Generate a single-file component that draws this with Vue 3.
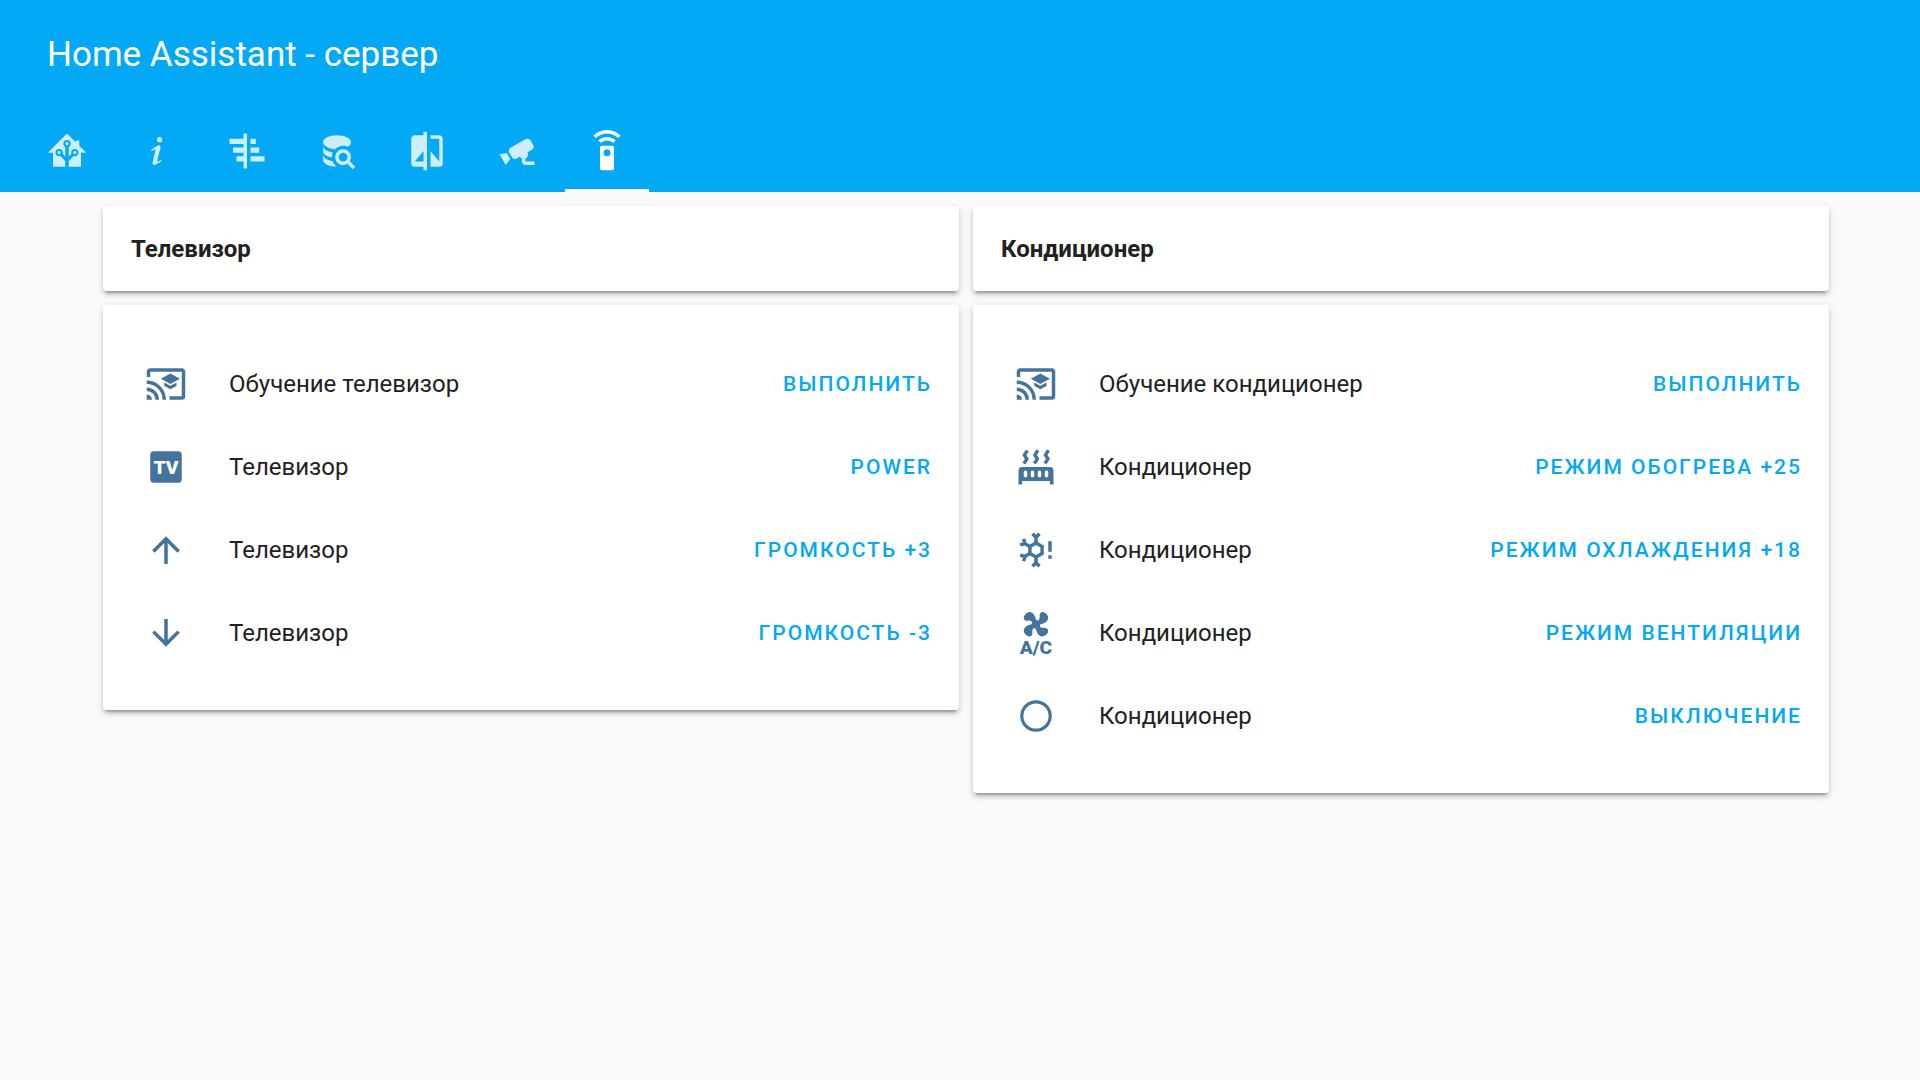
<script setup>
import { ref } from 'vue'

const icons = {
  home: 'M21.8,13H20V21H13V17.67L15.79,14.88L16.5,15C17.66,15 18.6,14.06 18.6,12.9C18.6,11.74 17.66,10.8 16.5,10.8A2.1,2.1 0 0,0 14.4,12.9L14.5,13.61L13,15.13V9.65C13.66,9.29 14.1,8.6 14.1,7.8A2.1,2.1 0 0,0 12,5.7A2.1,2.1 0 0,0 9.9,7.8C9.9,8.6 10.34,9.29 11,9.65V15.13L9.5,13.61L9.6,12.9A2.1,2.1 0 0,0 7.5,10.8A2.1,2.1 0 0,0 5.4,12.9A2.1,2.1 0 0,0 7.5,15L8.21,14.88L11,17.67V21H4V13H2.25C1.83,13 1.42,13 1.42,12.79C1.43,12.57 1.85,12.15 2.28,11.72L11,3C11.33,2.67 11.67,2.33 12,2.33C12.33,2.33 12.67,2.67 13,3L17,7V6H19V9L21.78,11.78C22.18,12.18 22.59,12.59 22.6,12.8C22.6,13 22.2,13 21.8,13M7.5,12A0.9,0.9 0 0,1 8.4,12.9A0.9,0.9 0 0,1 7.5,13.8A0.9,0.9 0 0,1 6.6,12.9A0.9,0.9 0 0,1 7.5,12M16.5,12C17,12 17.4,12.4 17.4,12.9C17.4,13.4 17,13.8 16.5,13.8A0.9,0.9 0 0,1 15.6,12.9A0.9,0.9 0 0,1 16.5,12M12,6.9C12.5,6.9 12.9,7.3 12.9,7.8C12.9,8.3 12.5,8.7 12,8.7C11.5,8.7 11.1,8.3 11.1,7.8C11.1,7.3 11.5,6.9 12,6.9Z',
  info: 'M13.5,4A1.5,1.5 0 0,0 12,5.5A1.5,1.5 0 0,0 13.5,7A1.5,1.5 0 0,0 15,5.5A1.5,1.5 0 0,0 13.5,4M13.14,8.77C11.95,8.87 8.7,11.46 8.7,11.46C8.5,11.61 8.56,11.6 8.72,11.88C8.88,12.15 8.86,12.17 9.05,12.04C9.25,11.91 9.58,11.7 10.13,11.36C12.25,10 10.47,13.14 9.56,18.43C9.2,21.05 11.56,19.7 12.17,19.3C12.77,18.91 14.38,17.8 14.54,17.69C14.76,17.54 14.6,17.42 14.43,17.17C14.31,17 14.19,17.12 14.19,17.12C13.54,17.55 12.35,18.45 12.19,17.88C12,17.31 13.22,13.4 13.89,10.71C14,10.07 14.3,8.67 13.14,8.77Z',
  gantt: 'M2,5H10V2H12V22H10V18H6V15H10V13H4V10H10V8H2V5M14,5H17V8H14V5M14,10H19V13H14V10M14,15H22V18H14V15Z',
  database: 'M18.68,12.32C16.92,10.56 14.07,10.57 12.32,12.33C10.56,14.09 10.56,16.94 12.32,18.69C13.81,20.17 16.11,20.43 17.89,19.32L21,22.39L22.39,21L19.3,17.89C20.43,16.12 20.17,13.8 18.68,12.32M17.27,17.27C16.29,18.25 14.71,18.24 13.73,17.27C12.76,16.29 12.76,14.71 13.74,13.73C14.71,12.76 16.29,12.76 17.27,13.73C18.24,14.71 18.24,16.29 17.27,17.27M10.9,20.1C10.25,19.44 9.74,18.65 9.42,17.78C6.27,17.25 4,15.76 4,14V17C4,19.21 7.58,21 12,21V21C11.6,20.74 11.23,20.44 10.9,20.1M4,9V12C4,13.68 6.07,15.12 9,15.7C9,15.63 9,15.57 9,15.5C9,14.57 9.2,13.65 9.58,12.81C6.34,12.3 4,10.79 4,9M12,3C7.58,3 4,4.79 4,7C4,9 7,10.68 10.85,11H10.9C12.1,9.74 13.76,9 15.5,9C16.41,9 17.31,9.19 18.14,9.56C19.17,9.09 19.87,8.12 20,7C20,4.79 16.42,3 12,3Z',
  compare: 'M19,3H14V5H19V18L14,12V21H19A2,2 0 0,0 21,19V5C21,3.89 20.1,3 19,3M10,18H5L10,12M10,3H5C3.89,3 3,3.89 3,5V19A2,2 0 0,0 5,21H10V23H12V1H10V3Z',
  cctv: 'M18.15,4.94C17.77,4.91 17.37,5 17,5.2L8.35,10.2C7.39,10.76 7.07,12 7.62,12.94L9.12,15.53C9.67,16.5 10.89,16.82 11.85,16.27L13.65,15.23C13.92,15.69 14.32,16.06 14.81,16.27V18.04C14.81,19.13 15.7,20 16.81,20H22V18.04H16.81V16.27C17.72,15.87 18.31,14.97 18.31,14C18.31,13.54 18.19,13.11 17.97,12.73L20.5,11.27C21.47,10.71 21.8,9.5 21.24,8.53L19.74,5.94C19.4,5.34 18.79,5 18.15,4.94M6.22,13.17L2,13.87L2.75,15.17L4.75,18.63L5.5,19.93L8.22,16.63L6.22,13.17Z',
  remote: 'M12,0C8.96,0 6.21,1.23 4.22,3.22L5.63,4.63C7.26,3 9.5,2 12,2C14.5,2 16.74,3 18.36,4.64L19.77,3.23C17.79,1.23 15.04,0 12,0M7.05,6.05L8.46,7.46C9.37,6.56 10.62,6 12,6C13.38,6 14.63,6.56 15.54,7.46L16.95,6.05C15.68,4.78 13.93,4 12,4C10.07,4 8.32,4.78 7.05,6.05M12,15A2,2 0 0,1 10,13A2,2 0 0,1 12,11A2,2 0 0,1 14,13A2,2 0 0,1 12,15M15,9H9A1,1 0 0,0 8,10V22A1,1 0 0,0 9,23H15A1,1 0 0,0 16,22V10A1,1 0 0,0 15,9Z',
  cast: 'M21,3H3C1.89,3 1,3.89 1,5V8H3V5H21V19H14V21H21A2,2 0 0,0 23,19V5C23,3.89 22.1,3 21,3M1,10V12A9,9 0 0,1 10,21H12C12,14.92 7.07,10 1,10M1,14V16A5,5 0 0,1 6,21H8A7,7 0 0,0 1,14M1,18V21H4A3,3 0 0,0 1,18M11,11.09V13.09L14.5,15L18,13.09V11.09L14.5,13L11,11.09M14.5,6L9,9L14.5,12L20,9L14.5,6Z',
  tv: 'M5,3H19A2,2 0 0,1 21,5V19A2,2 0 0,1 19,21H5A2,2 0 0,1 3,19V5A2,2 0 0,1 5,3Z',
  up: 'M13,20H11V8L5.5,13.5L4.08,12.08L12,4.16L19.92,12.08L18.5,13.5L13,8V20Z',
  down: 'M11,4H13V16L18.5,10.5L19.92,11.92L12,19.84L4.08,11.92L5.5,10.5L11,16V4Z',
  radiator: 'M7.95,3L6.53,5.19L7.95,7.4H7.94L5.95,10.5L4.22,9.6L5.64,7.39L4.22,5.19L6.22,2.09L7.95,3M13.95,2.89L12.53,5.1L13.95,7.3L13.94,7.31L11.95,10.4L10.22,9.5L11.64,7.3L10.22,5.1L12.22,2L13.95,2.89M20,2.89L18.56,5.1L20,7.3V7.31L18,10.4L16.25,9.5L17.67,7.3L16.25,5.1L18.25,2L20,2.89M2,22V14A2,2 0 0,1 4,12H20A2,2 0 0,1 22,14V22H20V20H4V22H2M6,14A1,1 0 0,0 5,15V17A1,1 0 0,0 7,17V15A1,1 0 0,0 6,14M10,14A1,1 0 0,0 9,15V17A1,1 0 0,0 11,17V15A1,1 0 0,0 10,14M14,14A1,1 0 0,0 13,15V17A1,1 0 0,0 15,17V15A1,1 0 0,0 14,14M18,14A1,1 0 0,0 17,15V17A1,1 0 0,0 19,17V15A1,1 0 0,0 18,14Z',
  snowflake: 'M16.46,9.41L15.45,8.82L13,7.38V5.12L14.71,3.41L13.29,2L12,3.29L10.71,2L9.29,3.41L11,5.12V7.38L8.5,8.82L6.5,7.69L5.92,5.36L4,5.88L4.47,7.65L2.7,8.12L3.22,10.05L5.55,9.43L7.55,10.56V13.45L5.55,14.58L3.22,13.96L2.7,15.89L4.47,16.36L4,18.12L5.93,18.64L6.55,16.31L8.55,15.18L11,16.62V18.88L9.29,20.59L10.71,22L12,20.71L13.29,22L14.7,20.59L13,18.88V16.62L15.5,15.17L16.46,14.6V9.41M9.5,10.56L12,9.11L14.5,10.56V13.44L12,14.89L9.5,13.44V10.56M19,7H21V13H19V7M19,15H21V17H19V15Z',
  fan: 'M6.59,0.66C8.93,-1.15 11.47,1.06 12.04,4.5C12.47,4.5 12.89,4.62 13.27,4.84C13.79,4.24 14.25,3.42 14.07,2.5C13.65,0.35 16.06,-1.39 18.35,1.58C20.16,3.92 17.95,6.46 14.5,7.03C14.5,7.46 14.39,7.89 14.16,8.27C14.76,8.78 15.58,9.24 16.5,9.06C18.63,8.64 20.38,11.04 17.41,13.34C15.07,15.15 12.53,12.94 11.96,9.5C11.53,9.5 11.11,9.37 10.74,9.15C10.22,9.75 9.75,10.58 9.93,11.5C10.35,13.64 7.94,15.39 5.65,12.42C3.83,10.07 6.05,7.53 9.5,6.97C9.5,6.54 9.63,6.12 9.85,5.74C9.25,5.23 8.43,4.76 7.5,4.94C5.37,5.36 3.62,2.96 6.59,0.66Z',
  circle: 'M12,3A9,9 0 1,0 12,21A9,9 0 1,0 12,3M12,4.8A7.2,7.2 0 1,1 12,19.2A7.2,7.2 0 1,1 12,4.8Z'
}

const tabs = [
  { icon: 'home', label: 'Дом' },
  { icon: 'info', label: 'Информация' },
  { icon: 'gantt', label: 'Графики' },
  { icon: 'database', label: 'База данных' },
  { icon: 'compare', label: 'Сравнение' },
  { icon: 'cctv', label: 'Камеры' },
  { icon: 'remote', label: 'Пульт' }
]
const active = ref('remote')

const columns = [
  {
    title: 'Телевизор',
    rows: [
      { icon: 'cast', name: 'Обучение телевизор', action: 'Выполнить' },
      { icon: 'tv', name: 'Телевизор', action: 'Power' },
      { icon: 'up', name: 'Телевизор', action: 'Громкость +3' },
      { icon: 'down', name: 'Телевизор', action: 'Громкость -3' }
    ]
  },
  {
    title: 'Кондиционер',
    rows: [
      { icon: 'cast', name: 'Обучение кондиционер', action: 'Выполнить' },
      { icon: 'radiator', name: 'Кондиционер', action: 'Режим обогрева +25' },
      { icon: 'snowflake', name: 'Кондиционер', action: 'Режим охлаждения +18' },
      { icon: 'fan', name: 'Кондиционер', action: 'Режим вентиляции' },
      { icon: 'circle', name: 'Кондиционер', action: 'Выключение' }
    ]
  }
]
</script>

<template>
  <div class="app">
    <header class="header">
      <h1 class="header-title">Home Assistant - сервер</h1>
      <nav class="tabs" role="tablist">
        <button
          v-for="tab in tabs"
          :key="tab.icon"
          class="tab"
          :class="{ active: tab.icon === active }"
          type="button"
          role="tab"
          :aria-label="tab.label"
          :aria-selected="tab.icon === active"
          @click="active = tab.icon"
        >
          <svg class="icon" viewBox="0 0 24 24" aria-hidden="true"><path :d="icons[tab.icon]" /></svg>
        </button>
      </nav>
    </header>

    <main class="view">
      <section v-for="column in columns" :key="column.title" class="column">
        <div class="card heading">
          <h2 class="heading-text">{{ column.title }}</h2>
        </div>
        <ul class="card entities">
          <li v-for="(row, i) in column.rows" :key="i" class="entity">
            <svg class="icon" viewBox="0 0 24 24" aria-hidden="true">
              <path :d="icons[row.icon]" fill-rule="evenodd" />
              <text v-if="row.icon === 'tv'" class="tv-label" x="12" y="16" text-anchor="middle">TV</text>
              <text v-if="row.icon === 'fan'" class="ac-label" x="12" y="24" text-anchor="middle">A/C</text>
            </svg>
            <span class="name">{{ row.name }}</span>
            <button class="action" type="button">{{ row.action }}</button>
          </li>
        </ul>
      </section>
    </main>
  </div>
</template>

<style>
body {
  margin: 0;
  background: #fafafa;
}
</style>

<style scoped>
.app {
  color: #212121;
  font-family: Roboto, "Noto Sans", sans-serif;
  font-size: 24px;
}

.header {
  background: #03a9f4;
  color: #fff;
}

.header-title {
  margin: 0;
  padding: 2px 47px 0;
  font-size: 35px;
  font-weight: 400;
  line-height: 106px;
}

.tabs {
  display: flex;
  gap: 6px;
  padding: 0 25px;
}

.tab {
  display: flex;
  align-items: center;
  justify-content: center;
  box-sizing: border-box;
  width: 84px;
  height: 84px;
  padding: 5px 0 0;
  border: 0;
  border-bottom: 3px solid transparent;
  background: none;
  color: rgba(255, 255, 255, 0.8);
  cursor: pointer;
}

.tab.active {
  border-bottom-color: #fff;
  color: #fff;
}

.icon {
  flex: none;
  width: 42px;
  height: 42px;
  overflow: visible;
  fill: currentColor;
}

.view {
  display: flex;
  align-items: flex-start;
  gap: 14px;
  padding: 14px 91px 14px 103px;
}

.column {
  display: flex;
  flex: 1;
  flex-direction: column;
  gap: 14px;
  min-width: 0;
}

.card {
  border-radius: 4px;
  background: #fff;
  box-shadow:
    0 4px 4px 0 rgba(0, 0, 0, 0.14),
    0 2px 9px 0 rgba(0, 0, 0, 0.12),
    0 5px 2px -3px rgba(0, 0, 0, 0.2);
}

.heading {
  padding: 2px 28px 0;
}

.heading-text {
  margin: 0;
  font-size: 24px;
  font-weight: 700;
  line-height: 83px;
}

.entities {
  margin: 0;
  padding: 37px 27px 36px 28px;
  list-style: none;
}

.entity {
  display: flex;
  align-items: center;
  height: 83px;
  padding-left: 14px;
}

.entity .icon {
  color: #44739e;
}

.name {
  flex: 1;
  margin-left: 42px;
}

.action {
  padding: 0;
  border: 0;
  background: none;
  color: #03a9f4;
  font-family: inherit;
  font-size: 21px;
  font-weight: 500;
  letter-spacing: 2px;
  text-transform: uppercase;
  cursor: pointer;
}

.tv-label {
  fill: #fff;
  font-size: 11px;
  font-weight: 900;
}

.ac-label {
  font-size: 11px;
  font-weight: 900;
}
</style>
